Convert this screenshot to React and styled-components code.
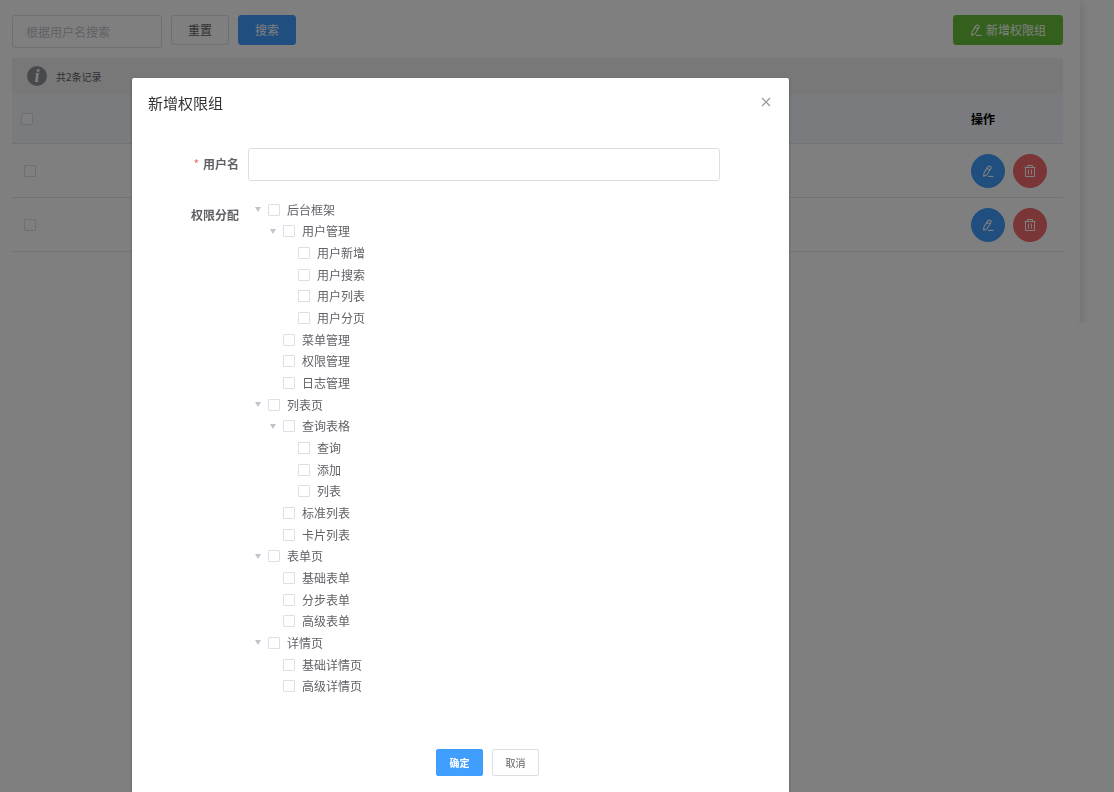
import { useState } from "react";
import styled, { createGlobalStyle } from "styled-components";

const GlobalStyle = createGlobalStyle`
 * {
  box-sizing: border-box;
 }
 body {
  margin: 0;
  background-color: #fff;
  color: #606266;
  font-family: "Noto Sans CJK SC", sans-serif;
  font-size: 12px;
 }
 button, input {
  font-family: inherit;
 }
`;

const Card = styled.main`
 margin-right: 34px;
 padding: 15px 17px 71px 12px;
 border-radius: 0 0 4px 0;
 background-color: #fff;
 box-shadow: 0 3px 12px rgba(0, 0, 0, 0.18);
`;

const Toolbar = styled.div`
 display: flex;
 align-items: flex-start;
 gap: 9px;
 margin-bottom: 10px;
`;

const TextInput = styled.input`
 width: ${props => props.$width || "100%"};
 height: 33px;
 padding: 0 13px;
 border: 1px solid #dcdfe6;
 border-radius: 3px;
 background-color: #fff;
 color: #606266;
 font-size: 12px;
 outline: none;
 &::placeholder {
  color: #c0c4cc;
 }
`;

const kinds = {
    plain: "background-color: #fff; border-color: #dcdfe6; color: #606266;",
    primary: "background-color: #409eff; border-color: #409eff; color: #fff;",
    success: "background-color: #67c23a; border-color: #67c23a; color: #fff;",
    danger: "background-color: #f56c6c; border-color: #f56c6c; color: #fff;",
};

const Button = styled.button`
 display: flex;
 align-items: center;
 justify-content: center;
 gap: 4px;
 height: 30px;
 padding: 0 16px;
 border: 1px solid;
 border-radius: 3px;
 font-size: 12px;
 line-height: 12px;
 white-space: nowrap;
 cursor: pointer;
 ${props => kinds[props.$kind || "plain"]}
`;

const AddButton = styled(Button)`
 margin-left: auto;
`;

const SmallButton = styled(Button)`
 min-width: 47px;
 height: 27px;
 padding: 0 12px;
 border-radius: 2px;
 font-size: 10px;
 font-weight: ${props => (props.$kind ? 700 : 400)};
`;

const RoundButton = styled(Button)`
 width: 34px;
 height: 34px;
 padding: 0;
 border-radius: 50%;
`;

const InfoBar = styled.div`
 display: flex;
 align-items: center;
 gap: 9px;
 height: 36px;
 padding: 0 15px;
 border-radius: 3px;
 background-color: #f0f0f0;
 font-size: 10px;
`;

const InfoMark = styled.span`
 width: 20px;
 height: 20px;
 border-radius: 50%;
 background-color: #909399;
 color: #fff;
 font: italic bold 18px/20px "Liberation Serif", serif;
 text-align: center;
`;

const Table = styled.table`
 width: 100%;
 border-collapse: separate;
 border-spacing: 0;
 table-layout: fixed;
 th, td {
  padding: 0 12px;
  text-align: left;
  border-bottom: 1px solid #e4e7ed;
 }
 th {
  height: 50px;
  padding-left: 9px;
  background-color: #f3f6ff;
  color: #000;
 }
 td {
  height: 54px;
 }
 th:last-child, td:last-child {
  width: 104px;
  padding-left: 12px;
 }
`;

const Actions = styled.div`
 display: flex;
 gap: 8px;
`;

const Checkbox = styled.input.attrs({ type: "checkbox" })`
 appearance: none;
 display: block;
 flex: none;
 width: 12px;
 height: 12px;
 margin: 0;
 border: 1px solid #dcdfe6;
 border-radius: 1px;
 background-color: #fff;
 &:checked {
  border-color: #409eff;
  background-color: #409eff;
 }
`;

const Mask = styled.div`
 position: fixed;
 inset: 0;
 overflow: hidden;
 padding: 78px 325px 0 132px;
 background-color: rgba(0, 0, 0, 0.5);
`;

const Dialog = styled.section`
 padding-bottom: 60px;
 border-radius: 2px;
 background-color: #fff;
 box-shadow: 0 1px 3px rgba(0, 0, 0, 0.3);
`;

const DialogHeader = styled.header`
 display: flex;
 align-items: center;
 justify-content: space-between;
 height: 48px;
 padding: 0 16px;
`;

const DialogTitle = styled.h2`
 margin: 0;
 color: #303133;
 font-size: 15px;
 font-weight: 400;
`;

const CloseButton = styled.button`
 display: flex;
 padding: 0;
 border: 0;
 background: none;
 color: #909399;
 cursor: pointer;
`;

const Form = styled.form`
 padding: 22px 69px 0 24px;
`;

const FormItem = styled.div`
 display: grid;
 grid-template-columns: 83px 1fr;
 gap: 9px;
 margin-bottom: 18px;
`;

const labelStyle = `
 color: #606266;
 font-weight: 700;
 line-height: 32px;
 text-align: right;
`;

const Label = styled.label`
 ${labelStyle}
 &::before {
  content: "*";
  margin-right: 4px;
  color: #f56c6c;
  font-weight: 400;
 }
`;

const GroupLabel = styled.span`
 ${labelStyle}
`;

const Tree = styled.ul`
 display: grid;
 grid-auto-rows: 1fr;
 min-height: 498px;
 margin: 0;
 padding: 0;
 list-style: none;
`;

const TreeRow = styled.li`
 display: flex;
 align-items: center;
 padding-left: ${props => 5 + props.$level * 15}px;
`;

const Caret = styled.button`
 display: flex;
 width: 15px;
 padding: 0;
 border: 0;
 background: none;
 visibility: ${props => (props.$leaf ? "hidden" : "visible")};
 &::before {
  content: "";
  margin-left: 2px;
  border: 3px solid transparent;
  border-top: 5px solid #c0c4cc;
  border-bottom: 0;
 }
`;

const NodeLabel = styled.label`
 display: flex;
 align-items: center;
 gap: 7px;
 line-height: 18px;
`;

const DialogFooter = styled.footer`
 display: flex;
 gap: 9px;
 padding: 34px 0 0 280px;
`;

const nodes = [
    [0, "后台框架"],
    [1, "用户管理"],
    [2, "用户新增"],
    [2, "用户搜索"],
    [2, "用户列表"],
    [2, "用户分页"],
    [1, "菜单管理"],
    [1, "权限管理"],
    [1, "日志管理"],
    [0, "列表页"],
    [1, "查询表格"],
    [2, "查询"],
    [2, "添加"],
    [2, "列表"],
    [1, "标准列表"],
    [1, "卡片列表"],
    [0, "表单页"],
    [1, "基础表单"],
    [1, "分步表单"],
    [1, "高级表单"],
    [0, "详情页"],
    [1, "基础详情页"],
    [1, "高级详情页"],
];

function EditIcon() {
    return (
        <svg width="12" height="12" viewBox="0 0 12 12" fill="none" stroke="currentColor" strokeWidth="1.1" strokeLinejoin="round" aria-hidden="true">
            <path d="M6 1.6Q6.5.7 7.4 1.1L8.6 1.8Q9.5 2.4 9 3.2L5 9.7 1.7 11.2 1.9 8Z M5 3.2 8 5" />
            <path d="M6 11.4H11.6" />
        </svg>
    );
}

function DeleteIcon() {
    return (
        <svg width="12" height="12" viewBox="0 0 12 12" fill="none" stroke="currentColor" aria-hidden="true">
            <path d="M.5 2.5H11.5M3.5 2.5V.5H8.5V2.5M1.5 2.5V11.5H10.5V2.5M4.5 4.5V9.5M7.5 4.5V9.5" />
        </svg>
    );
}

function CloseIcon() {
    return (
        <svg width="14" height="14" viewBox="0 0 14 14" fill="none" stroke="currentColor" strokeWidth="1.1" aria-hidden="true">
            <path d="M3 3 11 11M11 3 3 11" />
        </svg>
    );
}

function PermissionTree() {
    return (
        <Tree aria-labelledby="permissions">
            {nodes.map(([level, name], i) => {
                const leaf = !nodes[i + 1] || nodes[i + 1][0] <= level;
                return (
                    <TreeRow key={i} $level={level}>
                        <Caret type="button" $leaf={leaf} aria-label={"折叠" + name} />
                        <NodeLabel>
                            <Checkbox />
                            {name}
                        </NodeLabel>
                    </TreeRow>
                );
            })}
        </Tree>
    );
}

export default function App() {
    const [open, setOpen] = useState(true);
    const close = () => setOpen(false);

    return (
        <>
            <GlobalStyle />
            <Card>
                <Toolbar>
                    <TextInput $width="150px" placeholder="根据用户名搜索" aria-label="根据用户名搜索" />
                    <Button>重置</Button>
                    <Button $kind="primary">搜索</Button>
                    <AddButton $kind="success" onClick={() => setOpen(true)}>
                        <EditIcon />
                        新增权限组
                    </AddButton>
                </Toolbar>

                <InfoBar>
                    <InfoMark>i</InfoMark>
                    共2条记录
                </InfoBar>

                <Table>
                    <thead>
                        <tr>
                            <th><Checkbox aria-label="全选" /></th>
                            <th>操作</th>
                        </tr>
                    </thead>
                    <tbody>
                        {[1, 2].map(id => (
                            <tr key={id}>
                                <td><Checkbox aria-label={"选择" + id} /></td>
                                <td>
                                    <Actions>
                                        <RoundButton $kind="primary" aria-label="编辑"><EditIcon /></RoundButton>
                                        <RoundButton $kind="danger" aria-label="删除"><DeleteIcon /></RoundButton>
                                    </Actions>
                                </td>
                            </tr>
                        ))}
                    </tbody>
                </Table>
            </Card>

            {open && (
                <Mask>
                    <Dialog role="dialog" aria-labelledby="dialog-title">
                        <DialogHeader>
                            <DialogTitle id="dialog-title">新增权限组</DialogTitle>
                            <CloseButton onClick={close} aria-label="关闭"><CloseIcon /></CloseButton>
                        </DialogHeader>
                        <Form onSubmit={e => e.preventDefault()}>
                            <FormItem>
                                <Label htmlFor="username">用户名</Label>
                                <TextInput id="username" />
                            </FormItem>
                            <FormItem>
                                <GroupLabel id="permissions">权限分配</GroupLabel>
                                <PermissionTree />
                            </FormItem>
                            <DialogFooter>
                                <SmallButton $kind="primary" type="submit">确定</SmallButton>
                                <SmallButton type="button" onClick={close}>取消</SmallButton>
                            </DialogFooter>
                        </Form>
                    </Dialog>
                </Mask>
            )}
        </>
    );
}
